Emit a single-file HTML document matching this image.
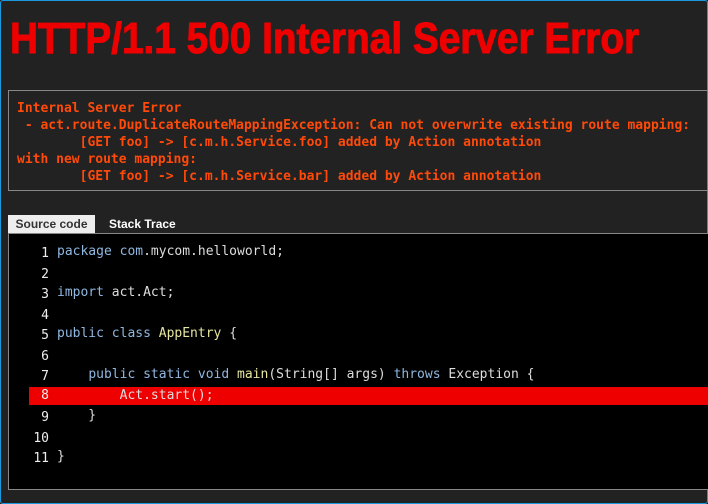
<!DOCTYPE html>
<html><head><style>
html,body{margin:0;padding:0;}
body{width:708px;height:504px;background:#222;position:relative;overflow:hidden;font-family:"DejaVu Sans Mono",monospace;}
.frame{position:absolute;left:0;top:0;width:706px;height:502px;border:1px solid #1a9be0;border-radius:3px;}
h1{position:absolute;left:10px;top:14px;margin:0;color:#ee0000;font-family:"Liberation Sans",sans-serif;font-weight:bold;font-size:44px;line-height:50px;transform-origin:0 0;transform:scaleX(0.881);white-space:nowrap;-webkit-text-stroke:1px #ee0000;}
.err{position:absolute;left:8px;top:90px;width:705px;height:101px;border:1px solid #888;box-sizing:border-box;}
.err pre{margin:0;position:absolute;left:8px;top:9px;color:#ff4a0a;font-family:"DejaVu Sans Mono",monospace;font-weight:bold;font-size:13px;line-height:17px;}
.tab1{position:absolute;left:8px;top:215px;width:87px;height:18px;background:#eee;color:#333;font:bold 12px "Liberation Sans",sans-serif;line-height:18px;text-align:center;}
.tab2{position:absolute;left:109px;top:215px;color:#fff;font:bold 12px "Liberation Sans",sans-serif;line-height:18px;}
.code{position:absolute;left:8px;top:233px;width:710px;height:257px;background:#000;border:1px solid #888;box-sizing:border-box;}
.line{position:absolute;left:0;height:20px;width:720px;font-size:13px;line-height:20px;color:#ddd;white-space:pre;}
.n{position:absolute;left:0;width:40px;text-align:right;color:#eee;top:2px;}
.c{position:absolute;left:48px;}
.hl{background:#ee0000;left:20px;}
.hl .n{left:-20px;top:0;}
.hl .c{left:28px;}
.k{color:#8fb7e0;}.y{color:#e6e6a0;}
</style></head><body>
<div class="frame"></div>
<h1>HTTP/1.1 500 Internal Server Error</h1>
<div class="err"><pre>Internal Server Error
 - act.route.DuplicateRouteMappingException: Can not overwrite existing route mapping:
        [GET foo] -&gt; [c.m.h.Service.foo] added by Action annotation
with new route mapping:
        [GET foo] -&gt; [c.m.h.Service.bar] added by Action annotation</pre></div>
<div class="tab1">Source code</div>
<div class="tab2">Stack Trace</div>
<div class="code">
<div class="line" style="top:8px"><span class="n">1</span><span class="c"><span class="k">package com</span>.mycom.helloworld;</span></div>
<div class="line" style="top:29px"><span class="n">2</span></div>
<div class="line" style="top:49px"><span class="n">3</span><span class="c"><span class="k">import</span> act.Act;</span></div>
<div class="line" style="top:70px"><span class="n">4</span></div>
<div class="line" style="top:90px"><span class="n">5</span><span class="c"><span class="k">public class</span> <span class="y">AppEntry</span> {</span></div>
<div class="line" style="top:111px"><span class="n">6</span></div>
<div class="line" style="top:131px"><span class="n">7</span><span class="c">    <span class="k">public static void</span> <span class="y">main</span>(String[] args) <span class="k">throws</span> Exception {</span></div>
<div class="line hl" style="top:153px;height:18px;line-height:18px"><span class="n">8</span><span class="c">        Act.start();</span></div>
<div class="line" style="top:172px"><span class="n">9</span><span class="c">    }</span></div>
<div class="line" style="top:193px"><span class="n">10</span></div>
<div class="line" style="top:213px"><span class="n">11</span><span class="c">}</span></div>
</div>
</body></html>
